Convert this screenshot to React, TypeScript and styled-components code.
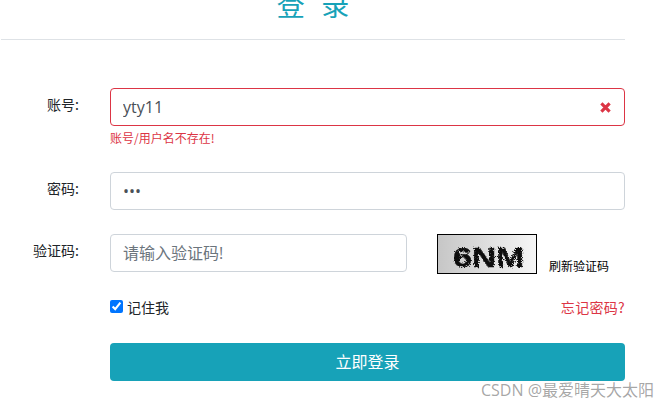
import React from 'react';
import styled, { createGlobalStyle } from 'styled-components';

const GlobalStyle = createGlobalStyle`
    html, body {
        margin: 0;
        padding: 0;
        background: #fff;
    }

    body {
        font-family: "Open Sans", "Noto Sans CJK SC", sans-serif;
        color: #212529;
        overflow: hidden;
    }
`;

const Page = styled.div`
    position: relative;
    width: 667px;
    height: 408px;
    overflow: hidden;
`;

const Panel = styled.div`
    width: 624px;
    margin-left: 1px;
`;

const Header = styled.header`
    height: 39px;
    border-bottom: 1px solid #dee2e6;
    overflow: hidden;
    display: flex;
    align-items: flex-end;
    justify-content: center;
`;

const Title = styled.h1`
    margin: 0 0 18px 5px;
    font-size: 28px;
    line-height: 34px;
    font-weight: 400;
    letter-spacing: 5px;
    color: #17a2b8;
    font-family: "Noto Sans CJK SC", sans-serif;
    white-space: nowrap;
`;

const Form = styled.form`
    display: flex;
    flex-direction: column;
    padding-top: 48px;
`;

const Row = styled.div<{ $gap: number }>`
    display: grid;
    grid-template-columns: 78px 1fr;
    column-gap: 31px;
    margin-bottom: ${({ $gap }) => $gap}px;
`;

const Label = styled.label`
    text-align: right;
    font-size: 14px;
    line-height: 20px;
    padding-top: 6px;
    color: #212529;
    font-family: "Noto Sans CJK SC", sans-serif;
`;

const InputBox = styled.div<{ $invalid?: boolean }>`
    position: relative;
    height: 38px;
    box-sizing: border-box;
    border: 1px solid ${({ $invalid }) => ($invalid ? '#dc3545' : '#ced4da')};
    border-radius: 4px;
    display: flex;
    align-items: center;
    padding: 0 12px;
`;

const Input = styled.input`
    flex: 1;
    min-width: 0;
    border: 0;
    outline: 0;
    padding: 0;
    background: transparent;
    font-family: "Open Sans", "Noto Sans CJK SC", sans-serif;
    font-size: 16px;
    color: #495057;

    &::placeholder {
        color: #6c757d;
        opacity: 1;
    }
`;

const ClearIcon = styled.svg`
    position: absolute;
    right: 13px;
    top: 13px;
    width: 11px;
    height: 11px;
`;

const ErrorText = styled.div`
    margin-top: 4px;
    font-size: 12px;
    line-height: 16px;
    color: #dc3545;
    font-family: "Noto Sans CJK SC", sans-serif;
`;

const CaptchaField = styled.div`
    display: flex;
    align-items: flex-start;
`;

const CaptchaInput = styled(InputBox)`
    width: 297px;
    flex: none;
`;

const CaptchaImage = styled.svg`
    display: block;
    flex: none;
    width: 100px;
    height: 40px;
    margin-left: 30px;
`;

const RefreshLink = styled.a`
    margin: 23px 0 0 12px;
    font-size: 12px;
    line-height: 17px;
    color: #000;
    white-space: nowrap;
    font-family: "Noto Sans CJK SC", sans-serif;
`;

const OptionsRow = styled.div`
    display: flex;
    align-items: center;
    justify-content: space-between;
    height: 20px;
`;

const Remember = styled.label`
    display: flex;
    align-items: center;
    font-size: 14px;
    line-height: 20px;
    color: #212529;
    font-family: "Noto Sans CJK SC", sans-serif;
`;

const Check = styled.input`
    width: 13px;
    height: 13px;
    margin: 0 4px 2px 0;
    accent-color: #0075ff;
`;

const ForgotLink = styled.a`
    font-size: 14px;
    line-height: 20px;
    letter-spacing: 0.3px;
    color: #dc3545;
    font-family: "Noto Sans CJK SC", sans-serif;
`;

const SubmitButton = styled.button`
    display: block;
    width: 100%;
    height: 38px;
    border: 0;
    border-radius: 4px;
    background: #17a2b8;
    color: #fff;
    font-size: 16px;
    font-family: "Noto Sans CJK SC", sans-serif;
    padding: 0 0 3px;
`;

const Watermark = styled.div`
    position: absolute;
    left: 481px;
    top: 380px;
    font-size: 16px;
    line-height: 20px;
    color: rgba(90, 90, 90, 0.55);
    font-family: "Open Sans", "Noto Sans CJK SC", sans-serif;
    white-space: nowrap;
`;

function Captcha() {
    return (
        <CaptchaImage viewBox="0 0 100 40" aria-label="captcha">
            <defs>
                <linearGradient id="captchaBg" x1="0" x2="1" y1="0" y2="0">
                    <stop offset="0" stopColor="#c6c6c6" />
                    <stop offset="1" stopColor="#f6f6f6" />
                </linearGradient>
                <filter id="captchaRough" x="-10%" y="-30%" width="120%" height="160%">
                    <feTurbulence type="fractalNoise" baseFrequency="0.8" numOctaves="2" seed="7" />
                    <feDisplacementMap in="SourceGraphic" scale="5" />
                    <feGaussianBlur stdDeviation="0.4" />
                </filter>
            </defs>
            <rect x="0.5" y="0.5" width="99" height="39" fill="url(#captchaBg)" stroke="#000" />
            <g filter="url(#captchaRough)" fill="#101010" stroke="#101010" strokeWidth="0.5" fontFamily="'Liberation Sans', sans-serif" fontWeight="700">
                <text x="16" y="33" fontSize="28" textLength="19" lengthAdjust="spacingAndGlyphs">6</text>
                <text x="35" y="33" fontSize="28" textLength="52" lengthAdjust="spacingAndGlyphs">NM</text>
            </g>
        </CaptchaImage>
    );
}

export default function App() {
    return (
        <Page>
            <GlobalStyle />
            <Panel>
                <Header>
                    <Title>登 录</Title>
                </Header>
                <Form>
                    <Row $gap={26}>
                        <Label>账号:</Label>
                        <div>
                            <InputBox $invalid>
                                <Input defaultValue="yty11" />
                                <ClearIcon viewBox="0 0 12 12">
                                    <path d="M1.5 1.5l9 9M10.5 1.5l-9 9" stroke="#dc3545" strokeWidth="3.4" fill="none" />
                                </ClearIcon>
                            </InputBox>
                            <ErrorText>账号/用户名不存在!</ErrorText>
                        </div>
                    </Row>
                    <Row $gap={24}>
                        <Label>密码:</Label>
                        <InputBox>
                            <Input type="password" defaultValue="123" />
                        </InputBox>
                    </Row>
                    <Row $gap={23}>
                        <Label>验证码:</Label>
                        <CaptchaField>
                            <CaptchaInput>
                                <Input placeholder="请输入验证码!" />
                            </CaptchaInput>
                            <Captcha />
                            <RefreshLink>刷新验证码</RefreshLink>
                        </CaptchaField>
                    </Row>
                    <Row $gap={26}>
                        <span />
                        <OptionsRow>
                            <Remember>
                                <Check type="checkbox" defaultChecked />
                                记住我
                            </Remember>
                            <ForgotLink>忘记密码?</ForgotLink>
                        </OptionsRow>
                    </Row>
                    <Row $gap={0}>
                        <span />
                        <SubmitButton type="button">立即登录</SubmitButton>
                    </Row>
                </Form>
            </Panel>
            <Watermark>CSDN @最爱晴天大太阳</Watermark>
        </Page>
    );
}
